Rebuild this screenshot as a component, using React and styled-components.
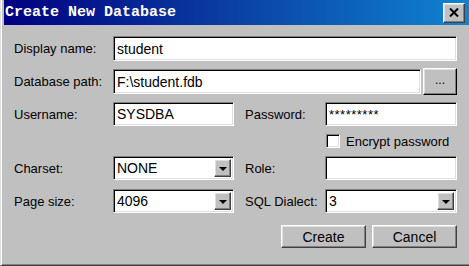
import React from 'react'
import styled, { createGlobalStyle } from 'styled-components'

const GlobalStyle = createGlobalStyle`
  html, body {
    margin: 0;
    padding: 0;
    overflow: hidden;
    background: #c0c0c0;
  }
  * { box-sizing: border-box; }
`

const Window = styled.div`
  width: 469px;
  height: 266px;
  display: flex;
  flex-direction: column;
  background: #c0c0c0;
  border-left: 1px solid #dfdfdf;
  border-bottom: 1px solid #404040;
  box-shadow: inset 1px 0 #fff, inset 0 -1px #808080;
  padding: 0 0 2px 3px;
  font-family: "Liberation Sans", Arial, sans-serif;
  font-size: 13px;
  color: #000;
`

const TitleBar = styled.div`
  height: 25px;
  display: flex;
  align-items: center;
  justify-content: space-between;
  padding: 0 4px 0 1px;
  background: linear-gradient(to right, #000080 0%, #0a3aa0 45%, #1084d0 100%);
`

const Title = styled.span`
  font-family: "Liberation Mono", "DejaVu Sans Mono", monospace;
  font-size: 15px;
  font-weight: bold;
  color: #fff;
`

const CloseButton = styled.div`
  width: 22px;
  height: 20px;
  display: flex;
  align-items: center;
  justify-content: center;
  background: #c0c0c0;
  border: 1px solid;
  border-color: #fff #404040 #404040 #fff;
  box-shadow: inset -1px -1px #808080, inset 1px 1px #dfdfdf;
`

const Content = styled.div`
  flex: 1;
  display: flex;
  flex-direction: column;
  padding: 11px 12px 0 10px;
`

const Row = styled.div`
  display: flex;
  align-items: center;
  height: ${p => p.$h || 24}px;
  margin-top: ${p => p.$mt || 0}px;
`

const Label = styled.label`
  width: ${p => p.$w}px;
  flex-shrink: 0;
  white-space: nowrap;
`

const sunken = `
  background: #fff;
  border: 1px solid;
  border-color: #808080 #fff #fff #808080;
  box-shadow: inset 1px 1px #000, inset -1px -1px #dfdfdf;
`

const Field = styled.div`
  ${sunken}
  height: 100%;
  width: ${p => (p.$w ? `${p.$w}px` : 'auto')};
  flex: ${p => (p.$w ? '0 0 auto' : '1')};
  display: flex;
  align-items: ${p => (p.$mask ? 'flex-start' : 'center')};
  padding: ${p => (p.$mask ? '4px 2px 0 3px' : '0 2px 0 3px')};
  font-size: ${p => (p.$mask ? '13px' : '14px')};
  letter-spacing: ${p => (p.$mask ? '0.5px' : '0')};
  white-space: nowrap;
  overflow: hidden;
`

const raised = `
  background: #c0c0c0;
  border: 1px solid;
  border-color: #fff #404040 #404040 #fff;
  box-shadow: inset -1px -1px #808080, inset 1px 1px #dfdfdf;
`

const Combo = styled.div`
  ${sunken}
  height: 100%;
  width: ${p => (p.$w ? `${p.$w}px` : 'auto')};
  flex: ${p => (p.$w ? '0 0 auto' : '1')};
  display: flex;
  align-items: stretch;
  padding: 2px 2px 2px 3px;
  font-size: 14px;
`

const ComboText = styled.span`
  flex: 1;
  display: flex;
  align-items: center;
`

const DropButton = styled.div`
  ${raised}
  width: 17px;
  display: flex;
  align-items: center;
  justify-content: center;
  &::after {
    content: '';
    border-left: 4px solid transparent;
    border-right: 4px solid transparent;
    border-top: 4px solid #000;
    margin-top: 1px;
  }
`

const BrowseButton = styled.div`
  ${raised}
  width: 34px;
  height: 27px;
  margin-left: 2px;
  display: flex;
  align-items: center;
  justify-content: center;
  font-size: 12px;
  border-color: #fff #000 #000 #fff;
  padding-bottom: 3px;
`

const Gap = styled.div`
  width: ${p => p.$w}px;
  flex-shrink: 0;
`

const CheckRow = styled.div`
  display: flex;
  align-items: center;
  height: 14px;
  margin-top: 8px;
  padding-left: 312px;
  gap: 6px;
`

const CheckBox = styled.span`
  ${sunken}
  width: 14px;
  height: 14px;
`

const ButtonRow = styled.div`
  display: flex;
  justify-content: flex-end;
  gap: 6px;
  margin-top: 12px;
`

const Button = styled.div`
  ${raised}
  width: 85px;
  height: 23px;
  display: flex;
  align-items: center;
  justify-content: center;
  font-size: 14px;
`

const App = () => (
  <>
    <GlobalStyle />
    <Window>
      <TitleBar>
        <Title>Create New Database</Title>
        <CloseButton>
          <svg width="10" height="9" viewBox="0 0 10 9">
            <path d="M1 0.5 L9 8.5 M9 0.5 L1 8.5" stroke="#000" strokeWidth="2" />
          </svg>
        </CloseButton>
      </TitleBar>
      <Content>
        <Row $h={25}>
          <Label $w={99}>Display name:</Label>
          <Field>student</Field>
        </Row>
        <Row $h={25} $mt={8}>
          <Label $w={99}>Database path:</Label>
          <Field>F:\student.fdb</Field>
          <BrowseButton>...</BrowseButton>
        </Row>
        <Row $mt={8}>
          <Label $w={99}>Username:</Label>
          <Field $w={121}>SYSDBA</Field>
          <Gap $w={11} />
          <Label $w={80}>Password:</Label>
          <Field $mask>*********</Field>
        </Row>
        <CheckRow>
          <CheckBox />
          <span>Encrypt password</span>
        </CheckRow>
        <Row $mt={8}>
          <Label $w={99}>Charset:</Label>
          <Combo $w={121}>
            <ComboText>NONE</ComboText>
            <DropButton />
          </Combo>
          <Gap $w={11} />
          <Label $w={80}>Role:</Label>
          <Field />
        </Row>
        <Row $mt={9}>
          <Label $w={99}>Page size:</Label>
          <Combo $w={121}>
            <ComboText>4096</ComboText>
            <DropButton />
          </Combo>
          <Gap $w={11} />
          <Label $w={80}>SQL Dialect:</Label>
          <Combo>
            <ComboText>3</ComboText>
            <DropButton />
          </Combo>
        </Row>
        <ButtonRow>
          <Button>Create</Button>
          <Button>Cancel</Button>
        </ButtonRow>
      </Content>
    </Window>
  </>
)

export default App
